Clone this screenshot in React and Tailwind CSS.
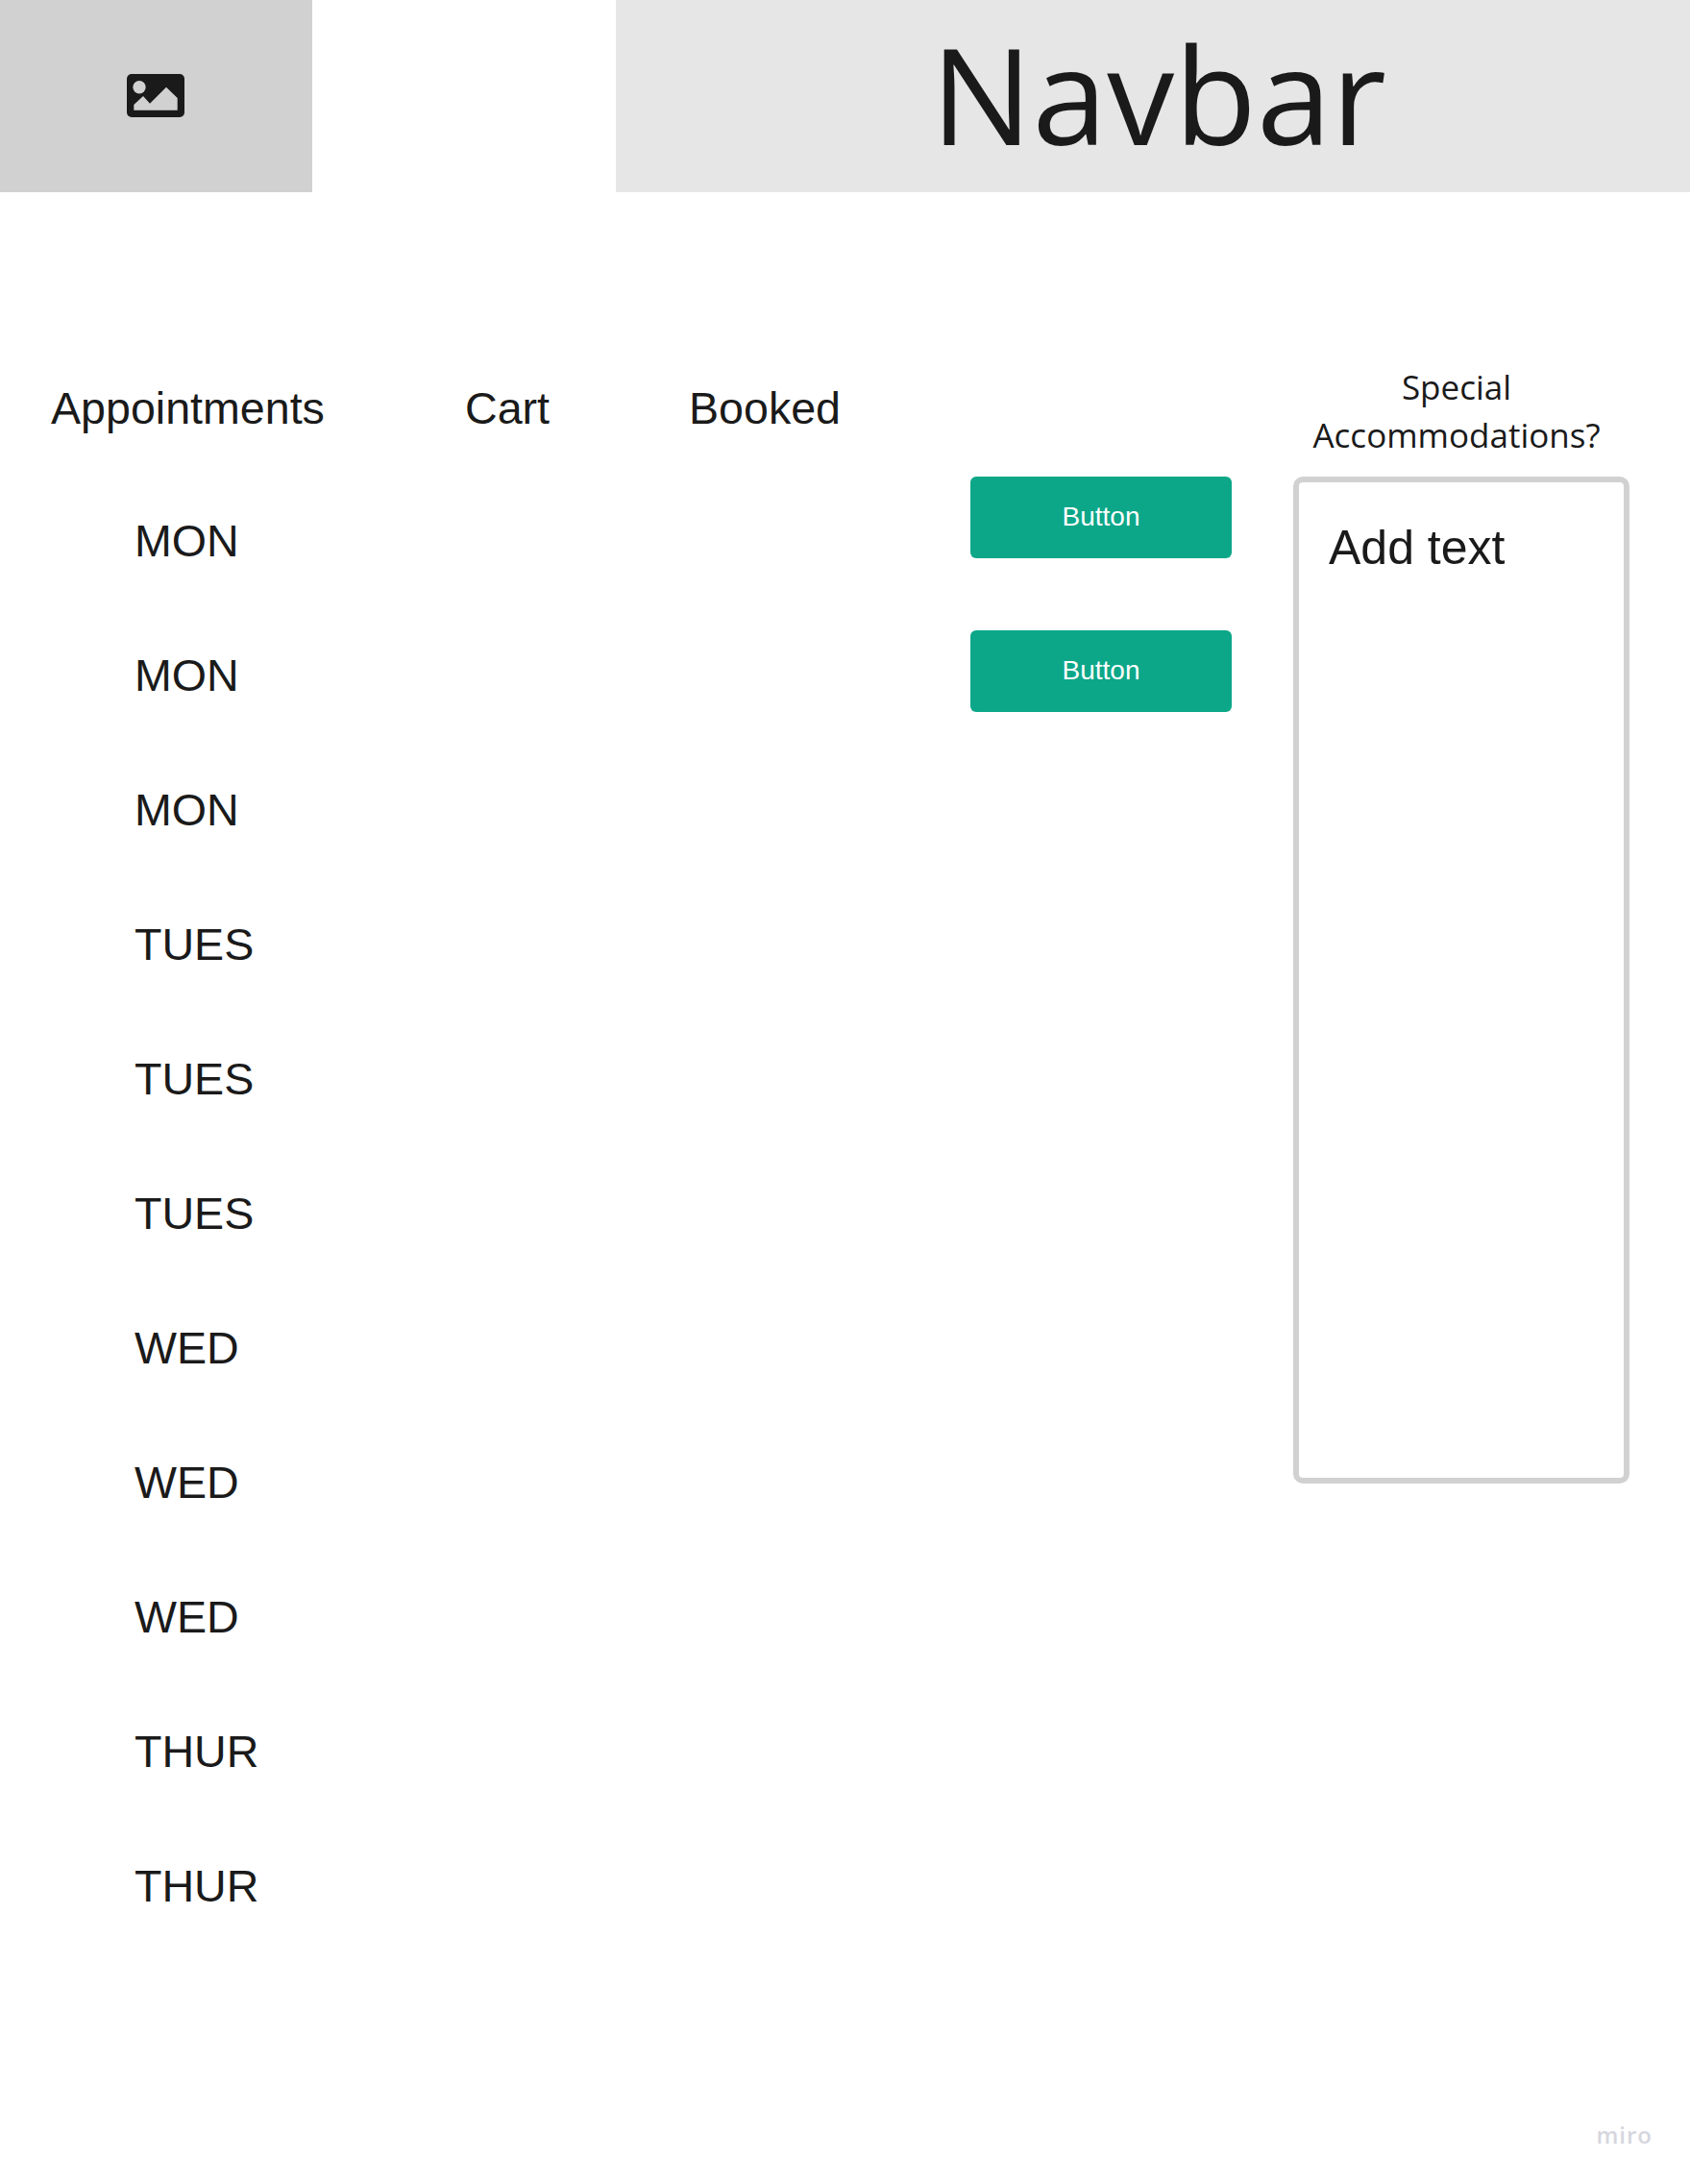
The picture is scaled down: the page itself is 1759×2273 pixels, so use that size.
const rows = ["MON","MON","MON","TUES","TUES","TUES","WED","WED","WED","THUR","THUR"];
const arial = "font-['Liberation_Sans',Arial,sans-serif]";
const open = "font-['Open_Sans',sans-serif]";

function ImageIcon() {
  return (
    <svg width="60" height="45" viewBox="0 0 60 45" className="-ml-px -mt-px block">
      <rect x="0" y="0" width="60" height="45" rx="5" fill="#1a1a1a" />
      <circle cx="13" cy="13.7" r="6.7" fill="#d1d1d1" />
      <path d="M7.3 37.7V32L17 23L24 30.7L41 13.7L52.7 25V37.7Z" fill="#d1d1d1" />
    </svg>
  );
}

function Btn() {
  return (
    <button className={`flex h-[85px] w-[272px] items-center justify-center rounded-[6px] bg-[#0ca789] pb-[2px] text-[28px] leading-none text-white ${arial}`}>
      Button
    </button>
  );
}

export default function App() {
  return (
    <div className="relative h-[2273px] w-[1759px] overflow-hidden bg-white text-[#1a1a1a]">
      <header className="flex h-[200px]">
        <div className="flex w-[325px] items-center justify-center bg-[#d1d1d1]"><ImageIcon /></div>
        <div className={`ml-[316px] flex flex-1 items-center justify-center bg-[#e6e6e6] pb-[6px] pl-[12px] text-[140px] leading-none ${open}`}>Navbar</div>
      </header>
      <main className={`flex pt-[185px] ${arial}`}>
        <section className="w-[484px] pl-[53px]">
          <h2 className="h-[80px] text-[46.6px] leading-[80px]">Appointments</h2>
          <ul className="mt-[28px] pl-[87px]">
            {rows.map((d, i) => (
              <li key={i} className="h-[140px] text-[46.6px] leading-[140px]">{d}</li>
            ))}
          </ul>
        </section>
        <h2 className="h-[80px] w-[233px] text-[46.6px] leading-[80px]">Cart</h2>
        <h2 className="h-[80px] w-[293px] text-[46.6px] leading-[80px]">Booked</h2>
        <div className="flex w-[336px] flex-col gap-[75px] pt-[111px]">
          <Btn />
          <Btn />
        </div>
        <div className="w-[350px]">
          <p className={`h-[111px] w-[340px] -translate-y-[7px] text-center text-[35px] leading-[50px] ${open}`}>Special<br />Accommodations?</p>
          <div className="h-[1048px] rounded-[10px] border-[6px] border-[#d1d1d1] px-[31px] pt-[33px] text-[50px] leading-[70px]">Add text</div>
        </div>
      </main>
      <div className={`absolute bottom-[39px] right-[39px] text-[24px] font-semibold leading-none tracking-[1px] text-[#d6d6de] ${open}`}>miro</div>
    </div>
  );
}
